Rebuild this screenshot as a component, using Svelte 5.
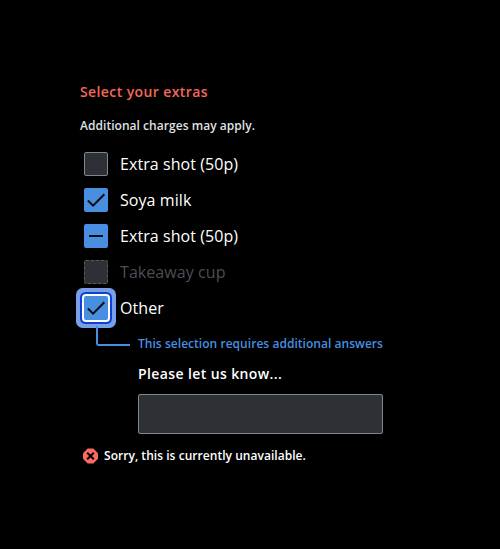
<script>
  const items = [
    { label: 'Extra shot (50p)', state: 'off' },
    { label: 'Soya milk', state: 'on' },
    { label: 'Extra shot (50p)', state: 'mixed' },
    { label: 'Takeaway cup', state: 'disabled' },
    { label: 'Other', state: 'on', focus: true }
  ];
</script>

<main>
  <h1>Select your extras</h1>
  <p class="help">Additional charges may apply.</p>
  <ul>
    {#each items as item}
      <li class={item.state} class:focus={item.focus}>
        <span class="box">
          {#if item.state === 'on'}
            <svg viewBox="0 0 24 24"><path d="M3.900 12.500 9.100 17.700 20.300 6.200" /></svg>
          {:else if item.state === 'mixed'}
            <svg viewBox="0 0 24 24"><path d="M5 12H19" /></svg>
          {/if}
        </span>
        <span>{item.label}</span>
      </li>
    {/each}
  </ul>
  <section>
    <div class="connector"></div>
    <div class="reveal">
      <p class="note">This selection requires additional answers</p>
      <label for="other">Please let us know...</label>
      <input id="other" type="text" />
    </div>
  </section>
  <p class="error">
    <svg viewBox="0 0 16 16"><path class="oct" d="M5.700 .5h5.600L16 5.200v5.600L11.300 15.500H5.700L1 10.800V5.200z" /><path class="x" d="M5.200 4.700l6.600 6.600m0-6.600l-6.600 6.600" /></svg>
    <span>Sorry, this is currently unavailable.</span>
  </p>
</main>

<style>
  :global(body) { background: #000; }
  main { box-sizing: border-box; height: 549px; padding: 80px; font-family: 'Open Sans', 'Noto Sans', sans-serif; color: #fff; }
  h1, p, ul { margin: 0; padding: 0; }
  h1 { font-size: 14px; line-height: 24px; font-weight: 600; letter-spacing: .4px; color: #f4675b; }
  .help { margin-top: 12px; font-size: 12px; line-height: 20px; font-weight: 600; letter-spacing: .04px; color: #dfe1e4; }
  ul { list-style: none; margin-top: 10px; }
  li { display: flex; align-items: center; height: 36px; padding-left: 4px; gap: 12px; font-size: 16px; letter-spacing: .07px; }
  .box { box-sizing: border-box; width: 24px; height: 24px; border: 1px solid #80868f; border-radius: 2px; background: #2d3135; }
  .box svg { display: block; width: 24px; height: 24px; fill: none; stroke: #0b0c0e; stroke-width: 2; }
  .on .box, .mixed .box { border: 0; background: #488fe1; }
  .disabled { color: #4a4f55; }
  .disabled .box { border: 1px dashed #555b63; }
  .focus .box { box-shadow: 0 0 0 2px #fff, 0 0 0 4px #0b43d6, 0 0 0 8px #7b9ee8; }
  section { display: flex; padding-left: 16px; }
  .connector { box-sizing: border-box; width: 34px; height: 20px; margin: 0 8px 0 0; border-left: 2px solid #488fe1; border-bottom: 2px solid #488fe1; border-bottom-left-radius: 3px; }
  .reveal { width: 245px; padding-top: 8px; }
  .note { font-size: 12px; line-height: 20px; font-weight: 600; letter-spacing: .04px; color: #488fe1; white-space: nowrap; }
  label { display: block; margin-top: 8px; font-size: 14px; line-height: 24px; font-weight: 600; letter-spacing: .39px; }
  input { display: block; box-sizing: border-box; width: 245px; height: 40px; margin: 8px 0 0; border: 1px solid #80868f; border-radius: 2px; background: #2d3135; }
  .error { display: flex; align-items: center; gap: 6px; margin-top: 12px; padding-left: 2px; font-size: 12px; line-height: 20px; font-weight: 600; letter-spacing: .04px; }
  .error svg { width: 16px; height: 16px; }
  .oct { fill: #f86a62; }
  .x { fill: none; stroke: #000; stroke-width: 2; }
</style>
